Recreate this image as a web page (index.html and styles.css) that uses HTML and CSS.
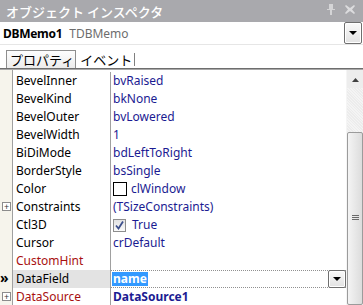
FILE: index.html
```html
<!DOCTYPE html>
<html lang="ja">

<head>
    <meta charset="UTF-8">
    <title>Object Inspector</title>
    <link rel="stylesheet" href="styles.css">
</head>

<body>
    <div class="inspector">
        <div class="titlebar">
            <span class="title">オブジェクト インスペクタ</span>
            <span class="tb-icons">
                <svg width="8" height="11" viewBox="0 0 8 11"><path d="M2 0h4v5h2v1H5v5H3V6H0V5h2z" fill="#d4d4d6"/></svg>
                <svg width="10" height="9" viewBox="0 0 10 9"><path d="M0 1l1-1 4 3 4-3 1 1-3 3.5 3 3.5-1 1-4-3-4 3-1-1 3-3.5z" fill="#dcdcde"/></svg>
            </span>
        </div>

        <div class="objrow">
            <span class="objname">DBMemo1</span>
            <span class="objtype">TDBMemo</span>
            <button class="dropbtn big"><svg width="8" height="4" viewBox="0 0 8 4"><path d="M0 0h8L4 4z" fill="#000"/></svg></button>
        </div>

        <div class="tabs">
            <div class="tab active">プロパティ</div>
            <div class="tab">イベント</div>
        </div>

        <div class="gridwrap">
            <div class="grid">
                <div class="row"><div class="gutter"></div><div class="name">BevelInner</div><div class="value">bvRaised</div></div>
                <div class="row"><div class="gutter"></div><div class="name">BevelKind</div><div class="value">bkNone</div></div>
                <div class="row"><div class="gutter"></div><div class="name">BevelOuter</div><div class="value">bvLowered</div></div>
                <div class="row"><div class="gutter"></div><div class="name">BevelWidth</div><div class="value">1</div></div>
                <div class="row"><div class="gutter"></div><div class="name">BiDiMode</div><div class="value">bdLeftToRight</div></div>
                <div class="row"><div class="gutter"></div><div class="name">BorderStyle</div><div class="value">bsSingle</div></div>
                <div class="row"><div class="gutter"></div><div class="name">Color</div><div class="value"><span class="swatch"></span>clWindow</div></div>
                <div class="row"><div class="gutter"><span class="plus">+</span></div><div class="name">Constraints</div><div class="value">(TSizeConstraints)</div></div>
                <div class="row"><div class="gutter"></div><div class="name">Ctl3D</div><div class="value"><span class="check"><svg width="9" height="9" viewBox="0 0 9 9"><path d="M1 4.5l2.5 3L8 0.5" fill="none" stroke="#3c4f8c" stroke-width="1.8"/></svg></span>True</div></div>
                <div class="row"><div class="gutter"></div><div class="name">Cursor</div><div class="value">crDefault</div></div>
                <div class="row"><div class="gutter"></div><div class="name ref">CustomHint</div><div class="value"></div></div>
                <div class="row selected"><div class="gutter"><span class="arrows">»</span></div><div class="name">DataField</div><div class="value"><span class="edit">name</span><button class="dropbtn small"><svg width="8" height="4" viewBox="0 0 8 4"><path d="M0 0h8L4 4z" fill="#000"/></svg></button></div></div>
                <div class="row"><div class="gutter"><span class="plus">+</span></div><div class="name ref">DataSource</div><div class="value bold">DataSource1</div></div>
            </div>
            <div class="vscroll">
                <div class="sc-up"><svg width="7" height="4" viewBox="0 0 7 4"><path d="M0 4h7L3.5 0z" fill="#404040"/></svg></div>
                <div class="sc-track"></div>
                <div class="sc-thumb"><span class="grip"></span></div>
            </div>
        </div>
    </div>
</body>

</html>
```

FILE: styles.css
```css
body {
    margin: 0;
    background-color: #fff;
    font-family: "Noto Sans", "Noto Sans CJK JP", sans-serif;
    font-size: 12px;
}

.inspector {
    width: 363px;
    height: 305px;
    overflow: hidden;
}

.titlebar {
    height: 22px;
    background-color: #a9a9ad;
    display: flex;
    align-items: center;
    justify-content: space-between;
    padding: 0 8px 0 6px;
}

.title {
    color: #fff;
    font-family: "Noto Sans CJK JP", sans-serif;
    font-size: 13px;
    font-weight: 500;
}

.tb-icons {
    display: flex;
    align-items: center;
    gap: 10px;
    padding-bottom: 3px;
}

.objrow {
    height: 22px;
    display: flex;
    align-items: center;
    padding-left: 3px;
    border-bottom: 1px solid #e6e6e6;
}

.objname {
    font-weight: bold;
    color: #000;
    letter-spacing: -0.3px;
}

.objtype {
    color: #6d6d6d;
    margin-left: 7px;
}

.dropbtn {
    display: flex;
    align-items: center;
    justify-content: center;
    padding: 0;
    border: 1px solid #6f6f6f;
    border-radius: 2px;
    background: linear-gradient(#fafafa, #e2e2e2);
    box-shadow: inset 0 0 0 1px #fff;
}

.dropbtn.big {
    margin-left: auto;
    margin-right: 1px;
    width: 18px;
    height: 22px;
}

.tabs {
    height: 23px;
    display: flex;
    align-items: flex-end;
    padding-left: 6px;
    border-bottom: 1px solid #6e6e6e;
    box-shadow: 0 1px 0 #a8a8a8;
    font-family: "Noto Sans CJK JP", sans-serif;
}

.tab {
    height: 17px;
    line-height: 17px;
    padding: 0 3px;
    font-size: 13px;
    color: #000;
}

.tab.active {
    border: 1px solid #8e8e8e;
    border-bottom: 0;
    background: linear-gradient(#fdfdfd, #ececec);
    padding: 0 1px 0 3px;
}

.tab + .tab {
    border-right: 1px solid #808080;
    height: 13px;
    line-height: 13px;
    margin-bottom: 2px;
    padding-left: 4px;
    padding-right: 2px;
}

.gridwrap {
    margin-top: 1px;
    display: flex;
    height: 235px;
}

.grid {
    flex: 1;
    padding-top: 2px;
    background: linear-gradient(to right, #f6f4ec 12px, #a0a0a0 12px, #a0a0a0 13px, transparent 13px);
}

.row {
    display: flex;
    height: 18px;
    line-height: 18px;
}

.gutter {
    width: 12px;
    margin-right: 1px;
    position: relative;
}

.plus {
    position: absolute;
    left: 2px;
    top: 4px;
    width: 7px;
    height: 7px;
    border: 1px solid #8c8c8c;
    background: #fff;
    font-size: 9px;
    line-height: 7px;
    text-align: center;
    color: #3a3a3a;
}

.arrows {
    position: absolute;
    left: 0;
    top: -1px;
    font-size: 14px;
    font-weight: bold;
    color: #000;
}

.name {
    width: 94px;
    padding-left: 3px;
    border-right: 1px solid #a0a0a0;
    color: #000;
}

.name.ref {
    color: #a81010;
}

.value {
    flex: 1;
    display: flex;
    align-items: center;
    padding-left: 2px;
    color: #1b1b92;
}

.value.bold {
    font-weight: bold;
}

.swatch {
    width: 12px;
    height: 12px;
    border: 1px solid #000;
    background: #fff;
    margin-right: 4px;
}

.check {
    width: 11px;
    height: 11px;
    border: 1px solid #8d8d8d;
    background: linear-gradient(#e2e2e2, #fafafa);
    margin-right: 6px;
    display: flex;
    align-items: center;
    justify-content: center;
}

.row.selected .name {
    background: #e3e3e3;
}

.row.selected .value {
    border-top: 1px dotted #909090;
    border-bottom: 1px dotted #909090;
    height: 16px;
    padding-left: 1px;
}

.edit {
    background: #3399ff;
    color: #fff;
    font-weight: bold;
    line-height: 14px;
    padding: 0 1px;
}

.dropbtn.small {
    margin-left: auto;
    width: 18px;
    height: 18px;
    margin-top: -1px;
    margin-bottom: -1px;
}

.vscroll {
    width: 16px;
    display: flex;
    flex-direction: column;
    background: #ededed;
    border-left: 1px solid #f5f5f5;
}

.sc-up {
    height: 16px;
    display: flex;
    align-items: center;
    justify-content: center;
    margin-top: 2px;
}

.sc-track {
    height: 44px;
    background: repeating-linear-gradient(45deg, #ececec 0 1px, #f4f4f4 1px 2px);
}

.sc-thumb {
    flex: 1;
    border: 1px solid #9b9b9b;
    border-radius: 2px;
    background: linear-gradient(to right, #f4f4f4, #dcdcdc);
    position: relative;
}

.grip {
    position: absolute;
    left: 4px;
    top: 82px;
    width: 7px;
    height: 6px;
    background: repeating-linear-gradient(#6a6a6a 0 1px, transparent 1px 2px);
}
```
